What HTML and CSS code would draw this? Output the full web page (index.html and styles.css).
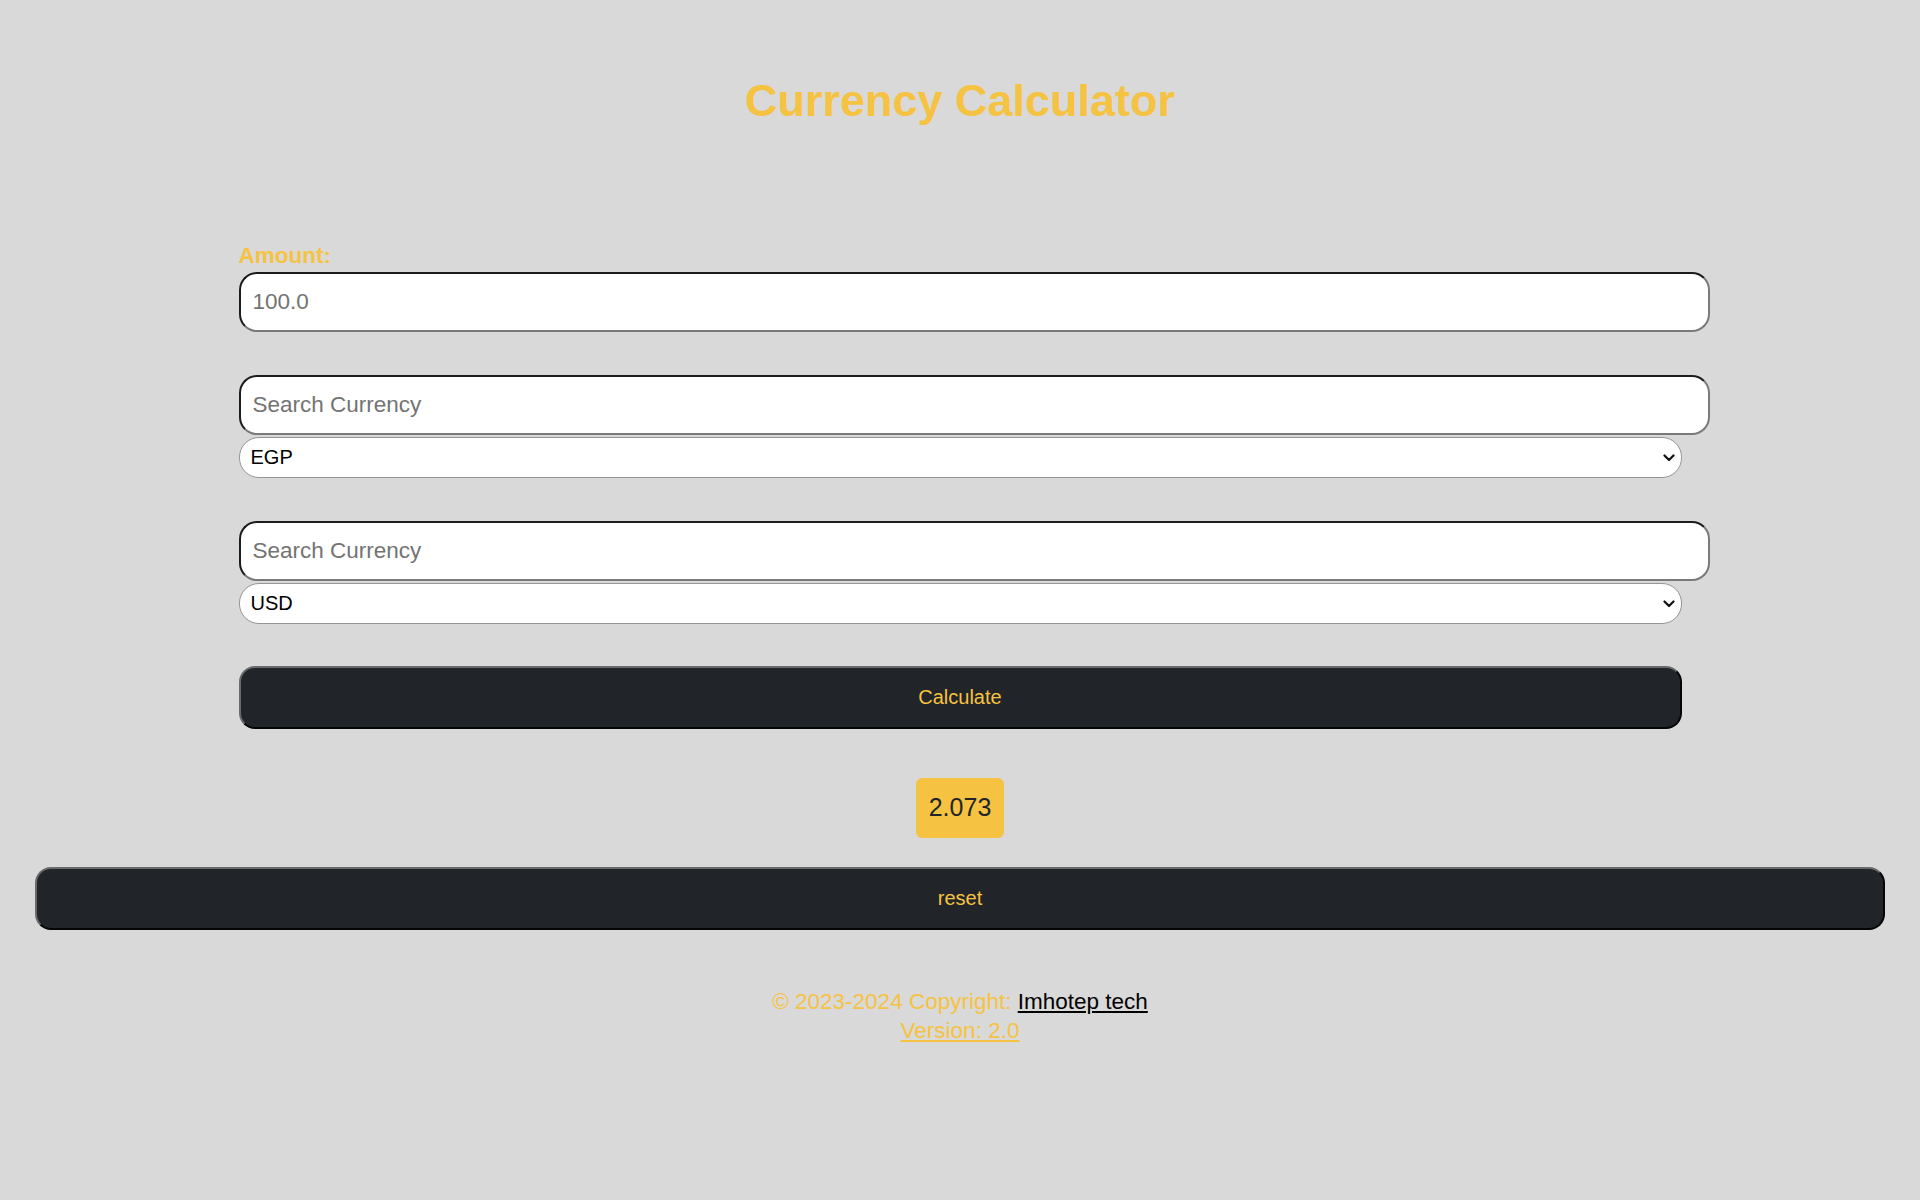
FILE: index.html
```html
<!DOCTYPE html>
<html lang="en">
<head>
<meta charset="utf-8">
<title>Currency Calculator</title>
<link rel="stylesheet" href="styles.css">
</head>
<body>
  <h1 class="title">Currency Calculator</h1>
  <form class="calc-form">
    <label class="amount-label" for="amount">Amount:</label>
    <input class="field field-amount" id="amount" type="text" placeholder="100.0">

    <div class="currency-group group-from">
      <input class="field" type="text" placeholder="Search Currency">
      <div class="select-wrap">
        <select class="currency-select"><option>EGP</option></select>
        <svg class="chevron" width="12" height="8" viewBox="0 0 12 8"><path d="M1.5 1.5 L6 6 L10.5 1.5" fill="none" stroke="#111" stroke-width="2.2" stroke-linecap="round" stroke-linejoin="round"/></svg>
      </div>
    </div>

    <div class="currency-group group-to">
      <input class="field" type="text" placeholder="Search Currency">
      <div class="select-wrap">
        <select class="currency-select"><option>USD</option></select>
        <svg class="chevron" width="12" height="8" viewBox="0 0 12 8"><path d="M1.5 1.5 L6 6 L10.5 1.5" fill="none" stroke="#111" stroke-width="2.2" stroke-linecap="round" stroke-linejoin="round"/></svg>
      </div>
    </div>

    <button class="dark-btn calc-btn" type="button">Calculate</button>
  </form>

  <div class="result-row">
    <span class="result-badge">2.073</span>
  </div>

  <div class="reset-row">
    <button class="dark-btn reset-btn" type="button">reset</button>
  </div>

  <footer class="footer">
    <div class="footer-line">© 2023-2024 Copyright: <a class="footer-link" href="#">Imhotep tech</a></div>
    <div class="footer-line"><a class="version-link" href="#">Version: 2.0</a></div>
  </footer>
</body>
</html>
```
FILE: styles.css
```css
* { box-sizing: border-box; }

html, body {
  margin: 0;
  padding: 0;
}

body {
  background: #d9d9d9;
  font-family: "Liberation Sans", Arial, sans-serif;
  min-height: 1200px;
}

.title {
  margin: 75px 0 0;
  font-size: 45px;
  line-height: 52px;
  font-weight: 700;
  text-align: center;
  color: #f6c242;
}

.calc-form {
  width: 1443px;
  margin: 116px auto 0;
  display: flex;
  flex-direction: column;
  align-items: stretch;
}

.amount-label {
  display: block;
  font-size: 22.5px;
  line-height: 26px;
  font-weight: 700;
  color: #f6c242;
  margin-bottom: 3px;
}

.field {
  box-sizing: content-box;
  width: 100%;
  height: 56px;
  padding: 0 12px;
  margin: 0;
  border: 2px solid;
  border-color: #1c1c1c #7a7a7a #7a7a7a #1c1c1c;
  border-radius: 18px;
  background: #fff;
  font-family: "Liberation Sans", Arial, sans-serif;
  font-size: 22.5px;
  color: #222;
  outline: none;
}

.field::placeholder {
  color: #737373;
}

.currency-group {
  display: flex;
  flex-direction: column;
}

.group-from { margin-top: 43px; }
.group-to { margin-top: 43.5px; }

.select-wrap {
  position: relative;
  margin-top: 1.5px;
}

.currency-select {
  appearance: none;
  -webkit-appearance: none;
  display: block;
  width: 100%;
  height: 41px;
  padding: 0 30px 0 11px;
  border: 1px solid #959595;
  border-radius: 20px;
  background: #fff;
  font-family: "Liberation Sans", Arial, sans-serif;
  font-size: 20px;
  color: #000;
}

.chevron {
  position: absolute;
  right: 7px;
  top: 17px;
  pointer-events: none;
}

.dark-btn {
  display: block;
  height: 63px;
  border: 2px solid;
  border-color: #6a6a6a #050505 #050505 #6a6a6a;
  border-radius: 16px;
  background: #212529;
  color: #f6c242;
  font-family: "Liberation Sans", Arial, sans-serif;
  font-size: 20px;
  cursor: pointer;
}

.calc-btn {
  width: 100%;
  margin-top: 42px;
}

.result-row {
  display: flex;
  justify-content: center;
  margin-top: 49px;
}

.result-badge {
  display: flex;
  align-items: center;
  justify-content: center;
  height: 60px;
  padding: 0 13px;
  border-radius: 6px;
  background: #f6c242;
  color: #212529;
  font-size: 25px;
}

.reset-row {
  margin: 29px 35px 0;
}

.reset-btn {
  width: 100%;
}

.footer {
  margin-top: 57px;
  text-align: center;
  font-size: 22.5px;
  line-height: 29px;
  color: #f6c242;
}

.footer-link {
  color: #000;
  text-decoration: underline;
}

.version-link {
  color: #f6c242;
  text-decoration: underline;
}
```
